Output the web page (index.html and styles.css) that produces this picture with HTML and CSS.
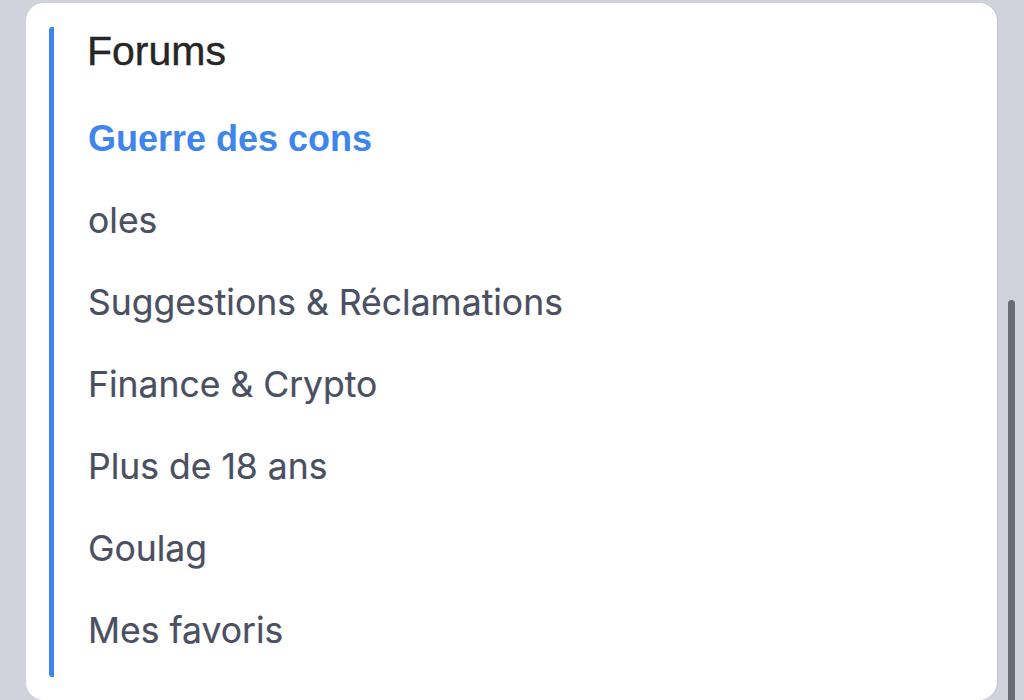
FILE: index.html
```html
<!DOCTYPE html>
<html lang="fr">
<head>
<meta charset="utf-8">
<link rel="stylesheet" href="styles.css">
</head>
<body>
<div class="card">
  <nav class="section">
    <h2 class="title">Forums</h2>
    <ul class="list">
      <li class="item active">Guerre des cons</li>
      <li class="item">oles</li>
      <li class="item">Suggestions &amp; Réclamations</li>
      <li class="item">Finance &amp; Crypto</li>
      <li class="item">Plus de 18 ans</li>
      <li class="item">Goulag</li>
      <li class="item">Mes favoris</li>
    </ul>
  </nav>
</div>
<div class="thumb"></div>
</body>
</html>
```

FILE: styles.css
```css
html, body {
  margin: 0;
  padding: 0;
  height: 100%;
  overflow: hidden;
}
body {
  background: #d1d3dc;
  font-family: Inter, "Noto Sans", sans-serif;
  position: relative;
}
.card {
  margin: 3px 0 0 26px;
  width: 971px;
  height: 697px;
  background: #ffffff;
  border-radius: 18px;
  padding: 24px 0 0 23px;
  box-sizing: border-box;
  box-shadow: 1px 0 1px rgba(0, 0, 0, 0.08);
}
.section {
  border-left: 5px solid #3d84ec;
  border-radius: 3px;
  height: 650px;
  padding-left: 33px;
  box-sizing: border-box;
}
.title {
  margin: 0;
  padding-top: 3px;
  font-family: "Liberation Sans", Arial, sans-serif;
  font-weight: 400;
  font-size: 41px;
  line-height: 42px;
  color: #262626;
  -webkit-text-stroke: 0.4px #262626;
}
.list {
  list-style: none;
  margin: 0;
  padding: 26px 0 0 1px;
}
.item {
  font-size: 35.5px;
  line-height: 82px;
  color: #4a4f62;
  -webkit-text-stroke: 0.2px #4a4f62;
}
.item.active {
  font-family: "Liberation Sans", Arial, sans-serif;
  font-weight: 700;
  font-size: 36px;
  color: #3e85ed;
  -webkit-text-stroke: 0;
}
.thumb {
  position: absolute;
  right: 9px;
  top: 300px;
  width: 7px;
  height: 420px;
  border-radius: 4px;
  background: #6a6a72;
}
```
